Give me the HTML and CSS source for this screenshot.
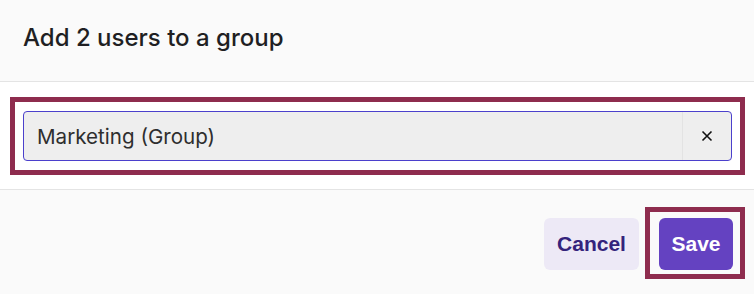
FILE: index.html
```html
<!DOCTYPE html>
<html lang="en">
<head>
    <meta charset="UTF-8">
    <title>Add users to a group</title>
    <link rel="stylesheet" href="styles.css">
</head>
<body>
<div class=dialog>
    <div class=dialog-header>
        <h2 class=dialog-title>Add 2 users to a group</h2>
    </div>
    <div class=dialog-body>
        <div class="highlight field-wrap">
            <div class=select>
                <div class=select-value>Marketing (Group)</div>
                <button class=select-clear aria-label="Clear">
                    <svg width="12" height="12" viewBox="0 0 12 12">
                        <path d="M1.5 1.5 L10.5 10.5 M10.5 1.5 L1.5 10.5" stroke="#111" stroke-width="1.6" fill="none"/>
                    </svg>
                </button>
            </div>
        </div>
    </div>
    <div class=dialog-footer>
        <button class="btn btn-secondary">Cancel</button>
        <div class="highlight save-wrap">
            <button class="btn btn-primary">Save</button>
        </div>
    </div>
</div>
</body>
</html>
```

FILE: styles.css
```css
html {
    font-family: Inter, "Noto Sans", sans-serif;
}

body {
    margin: 0;
    background: #fff;
}

.dialog {
    width: 754px;
    height: 294px;
    display: flex;
    flex-direction: column;
}

.dialog-header {
    height: 82px;
    box-sizing: border-box;
    padding: 0 23px 6px;
    display: flex;
    align-items: center;
    background: #fafafa;
    border-bottom: 1px solid #e4e4e4;
}

.dialog-title {
    margin: 0;
    font-size: 24px;
    font-weight: 500;
    color: #1f1f23;
}

.dialog-body {
    padding: 20px 14px 19px 15px;
    background: #fff;
    border-bottom: 1px solid #e4e4e4;
}

.highlight {
    outline: 5px solid #8e2c4e;
}

.field-wrap {
    padding: 9px 8px 9px 8px;
}

.select {
    display: flex;
    height: 50px;
    box-sizing: border-box;
    background: #eeeeee;
    border: 1px solid #4b40cc;
    border-radius: 4px;
}

.select-value {
    flex: 1;
    display: flex;
    align-items: center;
    padding-left: 13px;
    font-size: 20.6px;
    color: #2e2e2e;
}

.select-clear {
    width: 49px;
    border: 0;
    border-left: 1px solid #e3e3e3;
    background: transparent;
    display: flex;
    align-items: center;
    justify-content: center;
    padding: 0;
}

.dialog-footer {
    flex: 1;
    background: #fafafa;
    display: flex;
    justify-content: flex-end;
    align-items: flex-start;
    padding: 28px 14px 0 0;
    gap: 11px;
}

.save-wrap {
    padding: 6px 7px 4px 9px;
    margin-top: -6px;
}

.btn {
    height: 52px;
    border: 0;
    border-radius: 6px;
    font-family: "Liberation Sans", Arial, sans-serif;
    font-size: 21px;
    font-weight: bold;
    padding: 0;
}

.btn-secondary {
    width: 95px;
    background: #ede9f6;
    color: #34237c;
}

.btn-primary {
    width: 74px;
    background: #6442c1;
    color: #fff;
}
```
